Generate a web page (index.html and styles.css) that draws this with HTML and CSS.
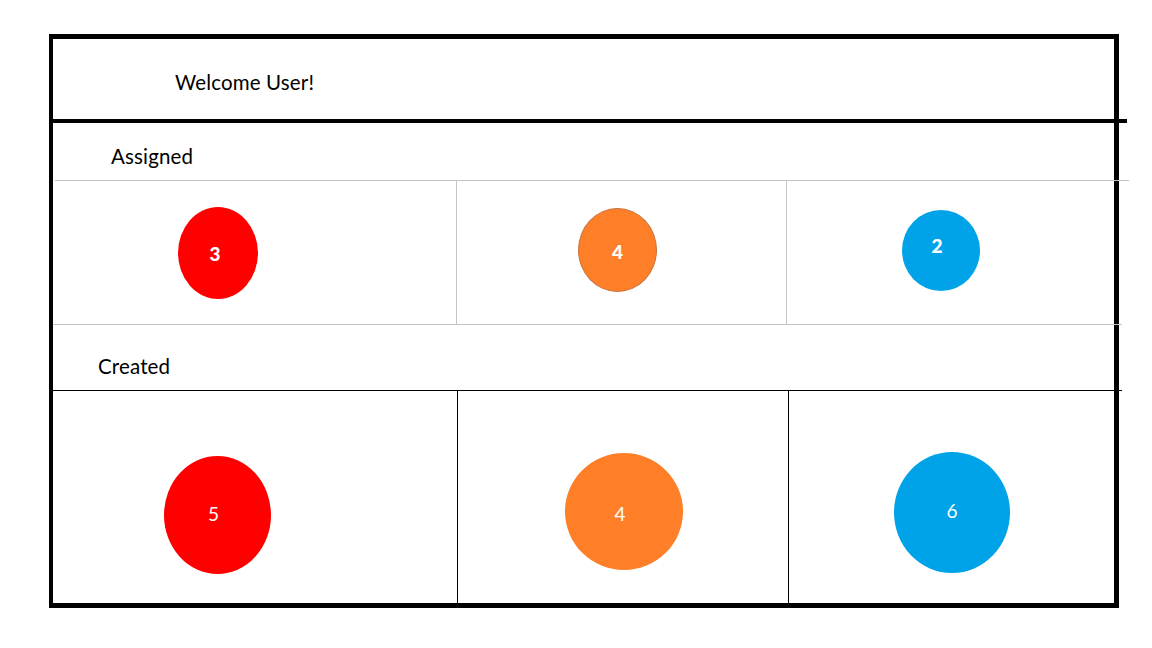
FILE: index.html
```html
<!DOCTYPE html>
<html lang="en">
<head>
<meta charset="utf-8">
<title>Dashboard</title>
<link rel="stylesheet" href="styles.css">
</head>
<body>
<div class="frame">
  <header class="welcome">Welcome User!</header>
  <div class="rule-thick"></div>
  <div class="label label-assigned">Assigned</div>
  <div class="rule-gray rule-gray-top"></div>
  <div class="row row-assigned">
    <div class="cell a1"><div class="dot red bold dot-a1">3</div></div>
    <div class="cell a2"><div class="dot orange bold dot-a2">4</div></div>
    <div class="cell a3"><div class="dot blue bold dot-a3">2</div></div>
  </div>
  <div class="rule-gray rule-gray-mid"></div>
  <div class="label label-created">Created</div>
  <div class="rule-black"></div>
  <div class="row row-created">
    <div class="cell b1"><div class="dot red dot-b1">5</div></div>
    <div class="cell b2"><div class="dot orange dot-b2">4</div></div>
    <div class="cell b3"><div class="dot blue dot-b3">6</div></div>
  </div>
</div>
</body>
</html>
```

FILE: styles.css
```css
html, body {
  margin: 0;
  padding: 0;
  background: #ffffff;
}
body {
  font-family: Lato, "Open Sans", "DejaVu Sans", sans-serif;
  color: #000000;
}
.frame {
  margin: 34px 0 0 49px;
  width: 1061px;
  height: 564px;
  border-style: solid;
  border-color: #000000;
  border-width: 5px 5px 5px 4px;
  display: flex;
  flex-direction: column;
}
.welcome {
  box-sizing: border-box;
  height: 80px;
  padding: 31px 0 0 122px;
  font-size: 20.5px;
  letter-spacing: 0.15px;
  line-height: 24px;
}
.rule-thick {
  height: 4px;
  background: #000000;
  margin-right: -13px;
}
.label {
  box-sizing: border-box;
  font-size: 20.5px;
  letter-spacing: 0.15px;
  line-height: 24px;
}
.label-assigned {
  height: 57px;
  padding: 21px 0 0 58px;
}
.label-created {
  height: 65px;
  padding: 29px 0 0 45px;
}
.rule-gray {
  height: 1px;
  background: #c4c4c4;
}
.rule-gray-top {
  margin-left: 2px;
  margin-right: -15px;
}
.rule-gray-mid {
  margin-right: -8px;
}
.rule-black {
  height: 1px;
  background: #000000;
  margin-right: -8px;
}
.row {
  display: flex;
}
.row-assigned {
  height: 143px;
}
.row-created {
  height: 212px;
}
.cell {
  box-sizing: border-box;
  display: flex;
  align-items: flex-start;
}
.a1 { width: 403px; }
.a2 { width: 330px; border-left: 1px solid #c4c4c4; }
.a3 { flex: 1; border-left: 1px solid #c4c4c4; }
.b1 { width: 404px; }
.b2 { width: 331px; border-left: 1px solid #000000; }
.b3 { flex: 1; border-left: 1px solid #000000; }

.dot {
  box-sizing: border-box;
  border-radius: 50%;
  display: flex;
  align-items: center;
  justify-content: center;
  color: #ffffff;
  font-size: 19px;
  line-height: 1;
}
.bold { font-weight: 900; font-size: 19px; }
.red { background: #ff0000; }
.orange { background: #fe7f27; }
.blue { background: #00a3e8; }

.dot-a1 { width: 80px; height: 92px; margin: 26px 0 0 125px; padding-right: 6px; }
.dot-a2 { width: 79px; height: 84px; margin: 27px 0 0 121px; border: 1px solid #c8743c; padding-top: 2px; }
.dot-a3 { width: 78px; height: 81px; margin: 29px 0 0 115px; padding: 0 8px 10px 0; }
.dot-b1 { width: 107px; height: 118px; margin: 65px 0 0 111px; padding: 0 8px 4px 0; }
.dot-b2 { width: 118px; height: 117px; margin: 62px 0 0 107px; padding: 3px 8px 0 0; }
.dot-b3 { width: 116px; height: 121px; margin: 61px 0 0 105px; padding-bottom: 5px; }
```
